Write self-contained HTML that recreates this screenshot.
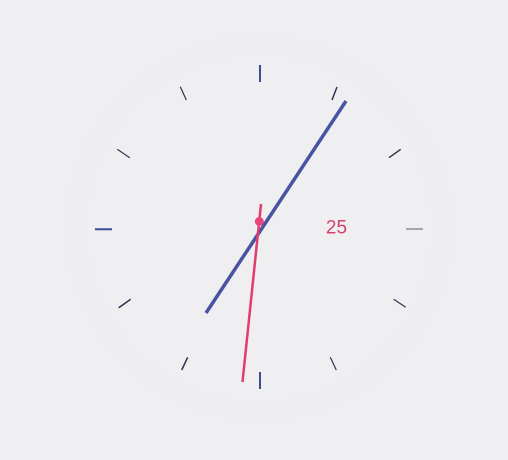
<!DOCTYPE html>
<html><head><meta charset="utf-8"><style>
html,body{margin:0;padding:0;background:#efeff1;}
svg{display:block}
</style></head><body>
<svg width="508" height="460" viewBox="0 0 508 460" xmlns="http://www.w3.org/2000/svg">
<rect width="508" height="460" fill="#efeff1"/>
<circle cx="259" cy="228" r="183" fill="none" stroke="#eeeef0" stroke-width="18"/>
<g stroke-linecap="butt">
<line x1="260" y1="65" x2="260" y2="82" stroke="#3f4a94" stroke-width="2"/>
<line x1="260" y1="372" x2="260" y2="389" stroke="#3f4a94" stroke-width="2"/>
<line x1="95" y1="229.3" x2="112" y2="229.3" stroke="#3f4a94" stroke-width="2"/>
<line x1="406" y1="229" x2="423" y2="229" stroke="#555a70" stroke-width="1"/>
<line x1="337" y1="87" x2="332" y2="100" stroke="#2e3450" stroke-width="1.5"/>
<line x1="180.3" y1="86.7" x2="186.3" y2="100" stroke="#2e3450" stroke-width="1.2"/>
<line x1="117.3" y1="149.3" x2="129.7" y2="157.7" stroke="#2e3450" stroke-width="1.2"/>
<line x1="400.7" y1="149.3" x2="389" y2="157.7" stroke="#2e3450" stroke-width="1.5"/>
<line x1="405.7" y1="307.3" x2="393.7" y2="299.3" stroke="#2e3450" stroke-width="1.2"/>
<line x1="336.3" y1="370" x2="330.3" y2="357.3" stroke="#2e3450" stroke-width="1.2"/>
<line x1="181.7" y1="370" x2="187.7" y2="357.3" stroke="#2e3450" stroke-width="1.5"/>
<line x1="118.7" y1="307.7" x2="130.7" y2="299.3" stroke="#2e3450" stroke-width="1.5"/>
</g>
<line x1="206" y1="313" x2="346" y2="101" stroke="#4a52a3" stroke-width="3.5"/>
<line x1="242.5" y1="382" x2="261" y2="204" stroke="#e23d70" stroke-width="2.5"/>
<circle cx="259.3" cy="221.5" r="4.5" fill="#e8457a"/>
<text x="336.5" y="233.5" text-anchor="middle" font-family="Liberation Sans, sans-serif" font-size="19" fill="#d2416a">25</text>
</svg>
</body></html>
